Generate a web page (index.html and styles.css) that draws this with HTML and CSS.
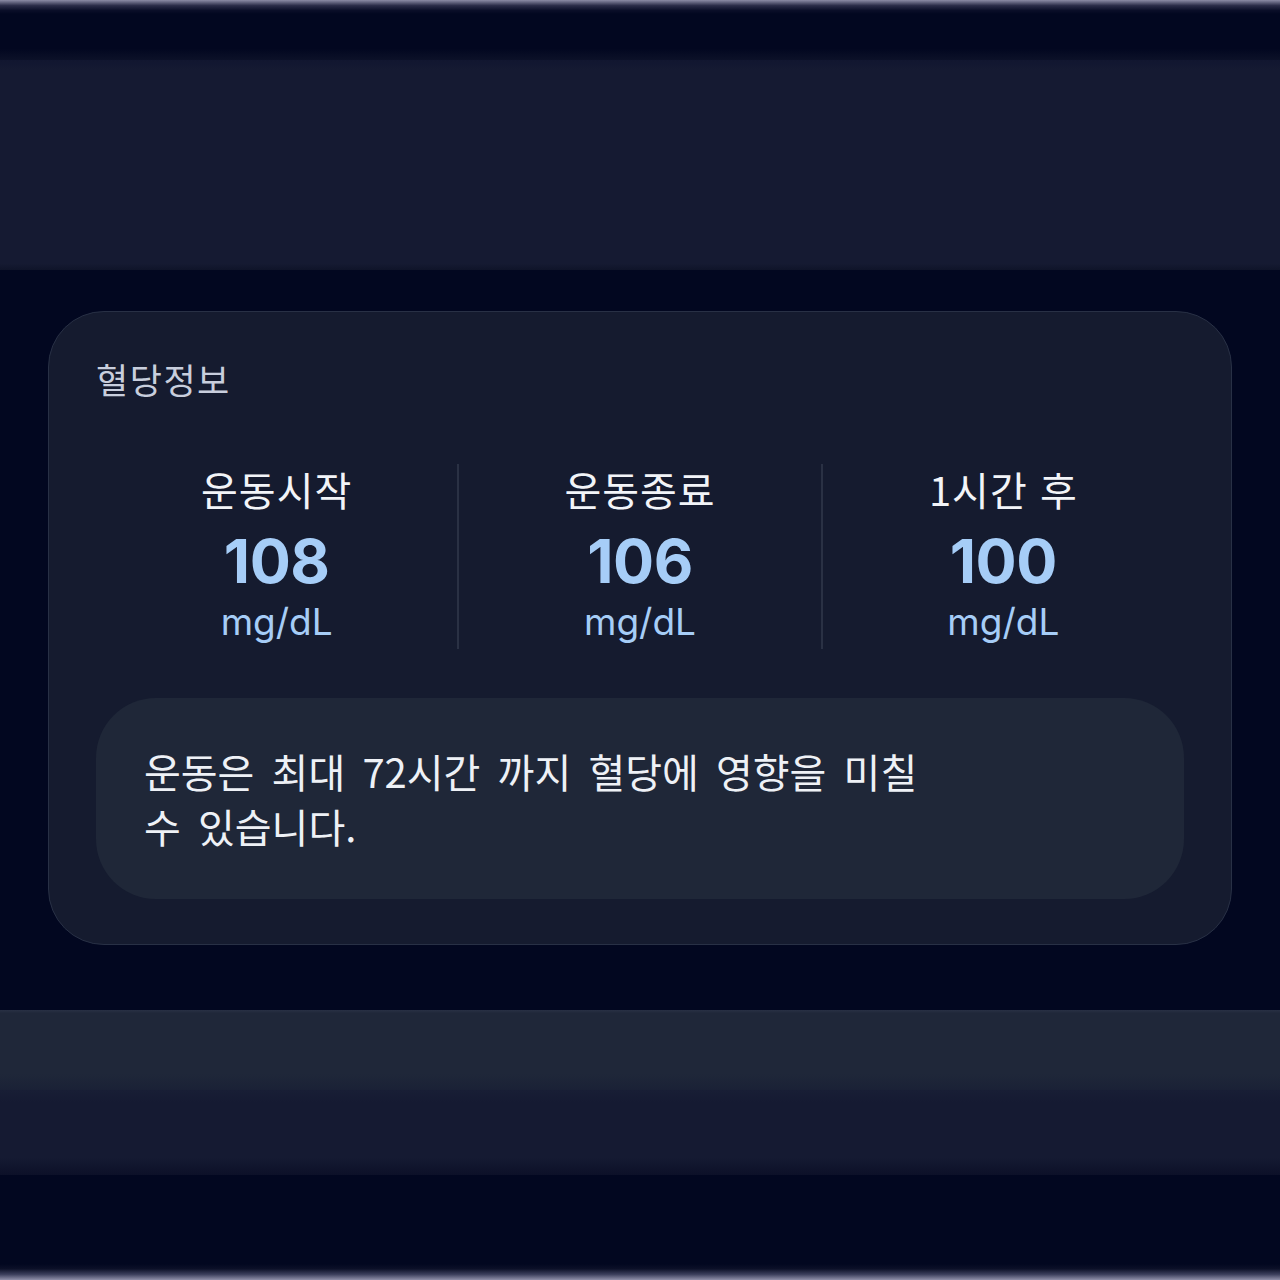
FILE: index.html
```html
<!DOCTYPE html>
<html lang="ko">
<head>
  <meta charset="UTF-8">
  <meta name="viewport" content="width=device-width, initial-scale=1.0">
  <title>혈당정보</title>
  <link rel="stylesheet" href="styles.css">
</head>
<body>
  <div class="edge edge-top"></div>
  <div class="band band-dark-top"></div>
  <div class="band band-header"></div>

  <main class="section">
    <div class="card">
      <h2 class="card-title">혈당정보</h2>

      <div class="stats">
        <div class="stat">
          <div class="stat-label">운동시작</div>
          <div class="stat-value">108</div>
          <div class="stat-unit">mg/dL</div>
        </div>
        <div class="stat">
          <div class="stat-label">운동종료</div>
          <div class="stat-value">106</div>
          <div class="stat-unit">mg/dL</div>
        </div>
        <div class="stat">
          <div class="stat-label">1시간 후</div>
          <div class="stat-value">100</div>
          <div class="stat-unit">mg/dL</div>
        </div>
      </div>

      <div class="notice">
        <p>운동은 최대 72시간 까지 혈당에 영향을 미칠 수 있습니다.</p>
      </div>
    </div>
  </main>

  <div class="band band-footer"></div>
  <div class="band band-footer-2"></div>
  <div class="band band-dark-bottom"></div>
  <div class="edge edge-bottom"></div>
</body>
</html>
```

FILE: styles.css
```css
body {
  font-family: "Noto Sans CJK KR", "Noto Sans", sans-serif;
  margin: 0;
  padding: 0;
  background-color: #020720; /* 진한 남색 배경 */
  color: #f2f4f8;
  height: 1280px;
  display: flex;
  flex-direction: column;
}

.edge {
  height: 14px;
}

.edge-top {
  background: linear-gradient(to bottom, #8c8ca6 0%, #2a2c48 40%, #0a0e28 75%, #020720 100%);
}

.edge-bottom {
  height: 16px;
  background: linear-gradient(to bottom, #020720 0%, #0c1028 30%, #3c3f5c 65%, #9090aa 100%);
}

.band-dark-top {
  height: 46px;
  background: linear-gradient(to bottom, #020720 0%, #020720 75%, #0c1128 100%);
}

.band-header {
  height: 210px;
  background: linear-gradient(to bottom, #111630 0%, #151a32 5%, #151a32 97%, #0f1429 100%);
}

.section {
  height: 740px;
  padding-top: 41px;
  box-sizing: border-box;
}

.card {
  margin-left: 48px;
  width: 1184px;
  height: 634px;
  box-sizing: border-box;
  padding: 46px 47px 47px;
  background-color: #151b2f;
  border: 1.5px solid #283045;
  border-radius: 56px;
}

.card-title {
  margin: 0;
  font-size: 35px;
  font-weight: 400;
  line-height: 42px;
  color: #c8cedd;
  letter-spacing: 1.5px;
}

.stats {
  display: flex;
  margin-top: 64px;
}

.stat {
  flex: 1;
  display: flex;
  flex-direction: column;
  align-items: center;
  height: 185px;
  box-sizing: border-box;
}

.stat + .stat {
  border-left: 2px solid #2a3144;
}

.stat-label {
  font-size: 40px;
  line-height: 50px;
  letter-spacing: 1px;
  color: #f2f4f8;
}

.stat-value {
  margin-top: 12px;
  font-family: Inter, "Noto Sans", sans-serif;
  font-size: 61px;
  font-weight: 700;
  line-height: 70px;
  color: #a6cdf7;
  letter-spacing: -0.5px;
}

.stat-unit {
  margin-top: 3px;
  font-family: Inter, "Noto Sans", sans-serif;
  font-size: 37px;
  line-height: 46px;
  color: #a6cdf7;
}

.notice {
  margin-top: 49px;
  height: 201px;
  box-sizing: border-box;
  padding: 0 48px;
  display: flex;
  align-items: center;
  background-color: #1f2738;
  border-radius: 60px;
}

.notice p {
  margin: 0;
  max-width: 800px;
  font-size: 40px;
  line-height: 55px;
  letter-spacing: 0;
  word-spacing: 6px;
  color: #eef1f6;
}

.band-footer {
  height: 80px;
  background: linear-gradient(to bottom, #283044 0%, #1f2739 4%, #1f2739 80%, #1a2136 100%);
}

.band-footer-2 {
  height: 85px;
  background: linear-gradient(to bottom, #181e35 0%, #151a32 15%, #151a32 80%, #0c1028 100%);
}

.band-dark-bottom {
  flex: 1;
  background-color: #020720;
}
```
